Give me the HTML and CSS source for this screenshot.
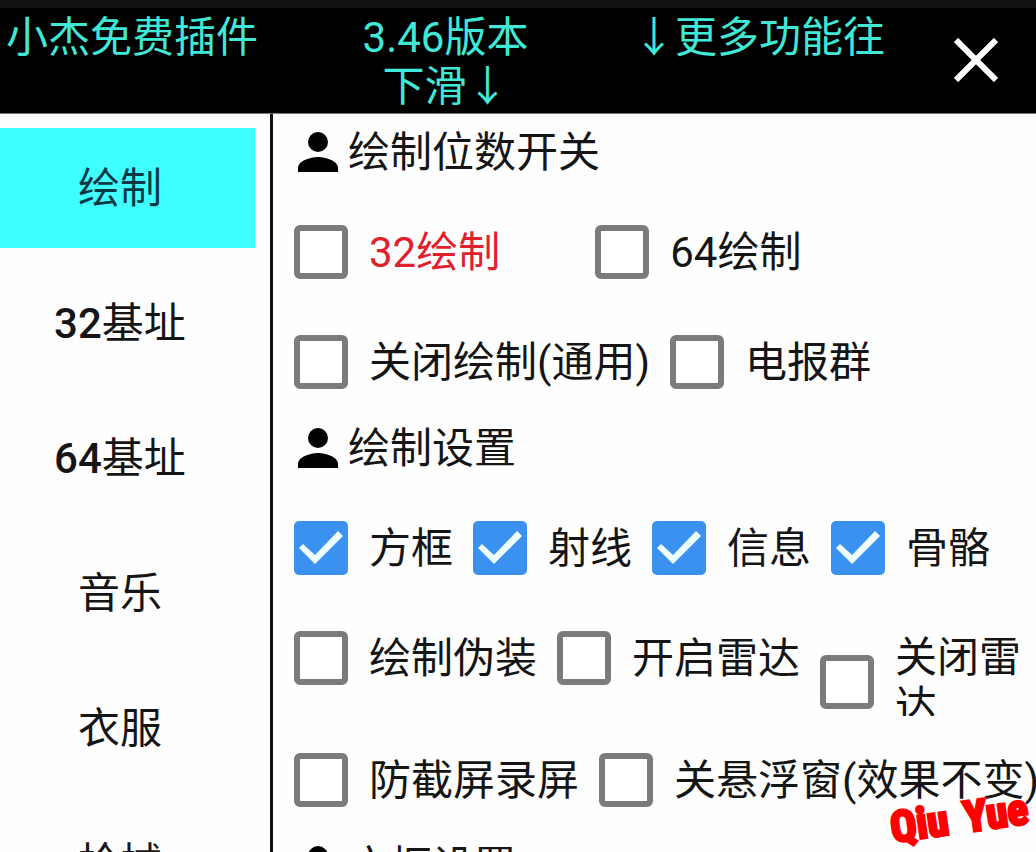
FILE: index.html
```html
<!DOCTYPE html>
<html lang="zh-CN">
<head>
<meta charset="utf-8">
<meta name="viewport" content="width=device-width, initial-scale=1">
<title>小杰免费插件</title>
<link rel="stylesheet" href="styles.css">
</head>
<body>
<svg class="symbols" aria-hidden="true">
  <symbol id="person" viewBox="0 0 40 41">
    <circle cx="20" cy="10" r="10"/>
    <path d="M0 40v-4c0-7 12-11 20-11s20 4 20 11v4z"/>
  </symbol>
</svg>
<div class="app">
  <header class="topbar">
    <h1 class="title">
      <span>小杰免费插件</span>
      <span class="version">3.46版本<br>下滑↓</span>
      <span>↓更多功能往</span>
    </h1>
    <button class="close" type="button" aria-label="关闭">
      <svg class="close-icon" viewBox="0 0 44 44"><path d="M2 2L42 42M42 2L2 42"/></svg>
    </button>
  </header>
  <div class="body">
    <nav class="sidebar">
      <button class="tab active" type="button">绘制</button>
      <button class="tab" type="button"><span class="digits">32</span>基址</button>
      <button class="tab" type="button"><span class="digits">64</span>基址</button>
      <button class="tab" type="button">音乐</button>
      <button class="tab" type="button">衣服</button>
      <button class="tab" type="button">枪械</button>
    </nav>
    <main class="panel">
      <section class="group">
        <h2 class="heading"><svg class="person"><use href="#person"/></svg>绘制位数开关</h2>
        <div class="row spaced">
          <label class="option danger"><input class="box" type="checkbox"><span>32绘制</span></label>
          <label class="option"><input class="box" type="checkbox"><span>64绘制</span></label>
        </div>
        <div class="row">
          <label class="option"><input class="box" type="checkbox"><span>关闭绘制(通用)</span></label>
          <label class="option"><input class="box" type="checkbox"><span>电报群</span></label>
        </div>
      </section>
      <section class="group">
        <h2 class="heading"><svg class="person"><use href="#person"/></svg>绘制设置</h2>
        <div class="row">
          <label class="option"><input class="box" type="checkbox" checked><span>方框</span></label>
          <label class="option"><input class="box" type="checkbox" checked><span>射线</span></label>
          <label class="option"><input class="box" type="checkbox" checked><span>信息</span></label>
          <label class="option"><input class="box" type="checkbox" checked><span>骨骼</span></label>
        </div>
        <div class="row tall">
          <label class="option"><input class="box" type="checkbox"><span>绘制伪装</span></label>
          <label class="option"><input class="box" type="checkbox"><span>开启雷达</span></label>
          <label class="option wrapping"><input class="box" type="checkbox"><span class="clipped">关闭雷达</span></label>
        </div>
        <div class="row">
          <label class="option"><input class="box" type="checkbox"><span>防截屏录屏</span></label>
          <label class="option"><input class="box" type="checkbox"><span>关悬浮窗(效果不变)</span></label>
        </div>
      </section>
      <section class="group">
        <h2 class="heading"><svg class="person"><use href="#person"/></svg>方框设置</h2>
      </section>
    </main>
  </div>
  <div class="signature"><span>Qiu</span><span>Yue</span></div>
</div>
</body>
</html>
```
FILE: styles.css
```css
* {
  box-sizing: border-box;
}

body {
  margin: 0;
  background: #fefefe;
  color: #151515;
  font: 400 42px/49px Roboto, "Noto Sans CJK SC", sans-serif;
}

.symbols {
  display: none;
}

.app {
  position: relative;
  display: flex;
  flex-direction: column;
  height: 100vh;
  overflow: hidden;
}

/* Top bar */
.topbar {
  display: flex;
  flex: none;
  align-items: flex-start;
  justify-content: space-between;
  padding: 5px 38px 2px 6px;
  border-top: 8px solid #111;
  border-bottom: 1px solid #777;
  background: #000;
}

.title {
  display: flex;
  flex: 1;
  justify-content: space-between;
  margin: 0 69px 0 0;
  color: #40e8d8;
  font: inherit;
}

.version {
  text-align: center;
}

.close {
  flex: none;
  margin: 25px 0 0;
  padding: 0;
  border: 0;
  background: none;
  line-height: 0;
}

.close-icon {
  width: 44px;
  height: 44px;
  fill: none;
  stroke: #fff;
  stroke-width: 6;
}

/* Columns */
.body {
  display: flex;
  flex: 1;
  min-height: 0;
}

.sidebar {
  display: flex;
  flex: none;
  flex-direction: column;
  gap: 15px;
  width: 273px;
  padding: 14px 15px 0 0;
  border-right: 3px solid #111;
}

.tab {
  flex: none;
  height: 120px;
  padding: 0 15px 0 0;
  border: 0;
  background: none;
  color: inherit;
  font: inherit;
}

.tab.active {
  background: #40ffff;
  color: #0b3a46;
}

.digits {
  font-weight: 500;
}

.panel {
  flex: 1;
  min-width: 0;
  padding: 14px 0 0 21px;
}

/* Option groups */
.group {
  display: flex;
  flex-direction: column;
  gap: 56px;
  padding-bottom: 35px;
}

.heading {
  display: flex;
  align-items: center;
  gap: 10px;
  margin: 0 0 -8px 4px;
  font: inherit;
}

.person {
  width: 40px;
  height: 41px;
  fill: #000;
}

.row {
  display: flex;
  align-items: flex-start;
  gap: 20px;
}

.row.spaced {
  gap: 95px;
}

.row.tall {
  margin-bottom: -36px;
}

.option {
  display: flex;
  flex: none;
  align-items: center;
  gap: 21px;
  white-space: nowrap;
}

.option.danger {
  color: #e0202c;
}

.option.wrapping {
  flex: 0 1 auto;
  white-space: normal;
}

.clipped {
  padding: 2px 0;
  clip-path: inset(0 0 17px 0);
}

.box {
  flex: none;
  width: 54px;
  height: 54px;
  margin: 0;
  border: 6px solid #7b7b7b;
  border-radius: 6px;
  background: #fff;
  appearance: none;
}

.box:checked {
  border: 0;
  border-radius: 5px;
  background: #3b91f0;
}

.box:checked::before {
  display: block;
  width: 54px;
  height: 54px;
  background: #edffff;
  clip-path: polygon(5px 27px, 9px 23px, 21px 34px, 44px 10px, 49px 15px, 21px 43px);
  content: "";
}

/* Signature laid over the panel corner */
.signature {
  position: absolute;
  right: 8px;
  bottom: 11px;
  display: flex;
  gap: 16px;
  color: #f00;
  font: 700 43px/46px "Liberation Sans Narrow", "Roboto Condensed", Roboto, sans-serif;
  -webkit-text-stroke: 3px #f00;
  transform: rotate(-8deg);
}
```
